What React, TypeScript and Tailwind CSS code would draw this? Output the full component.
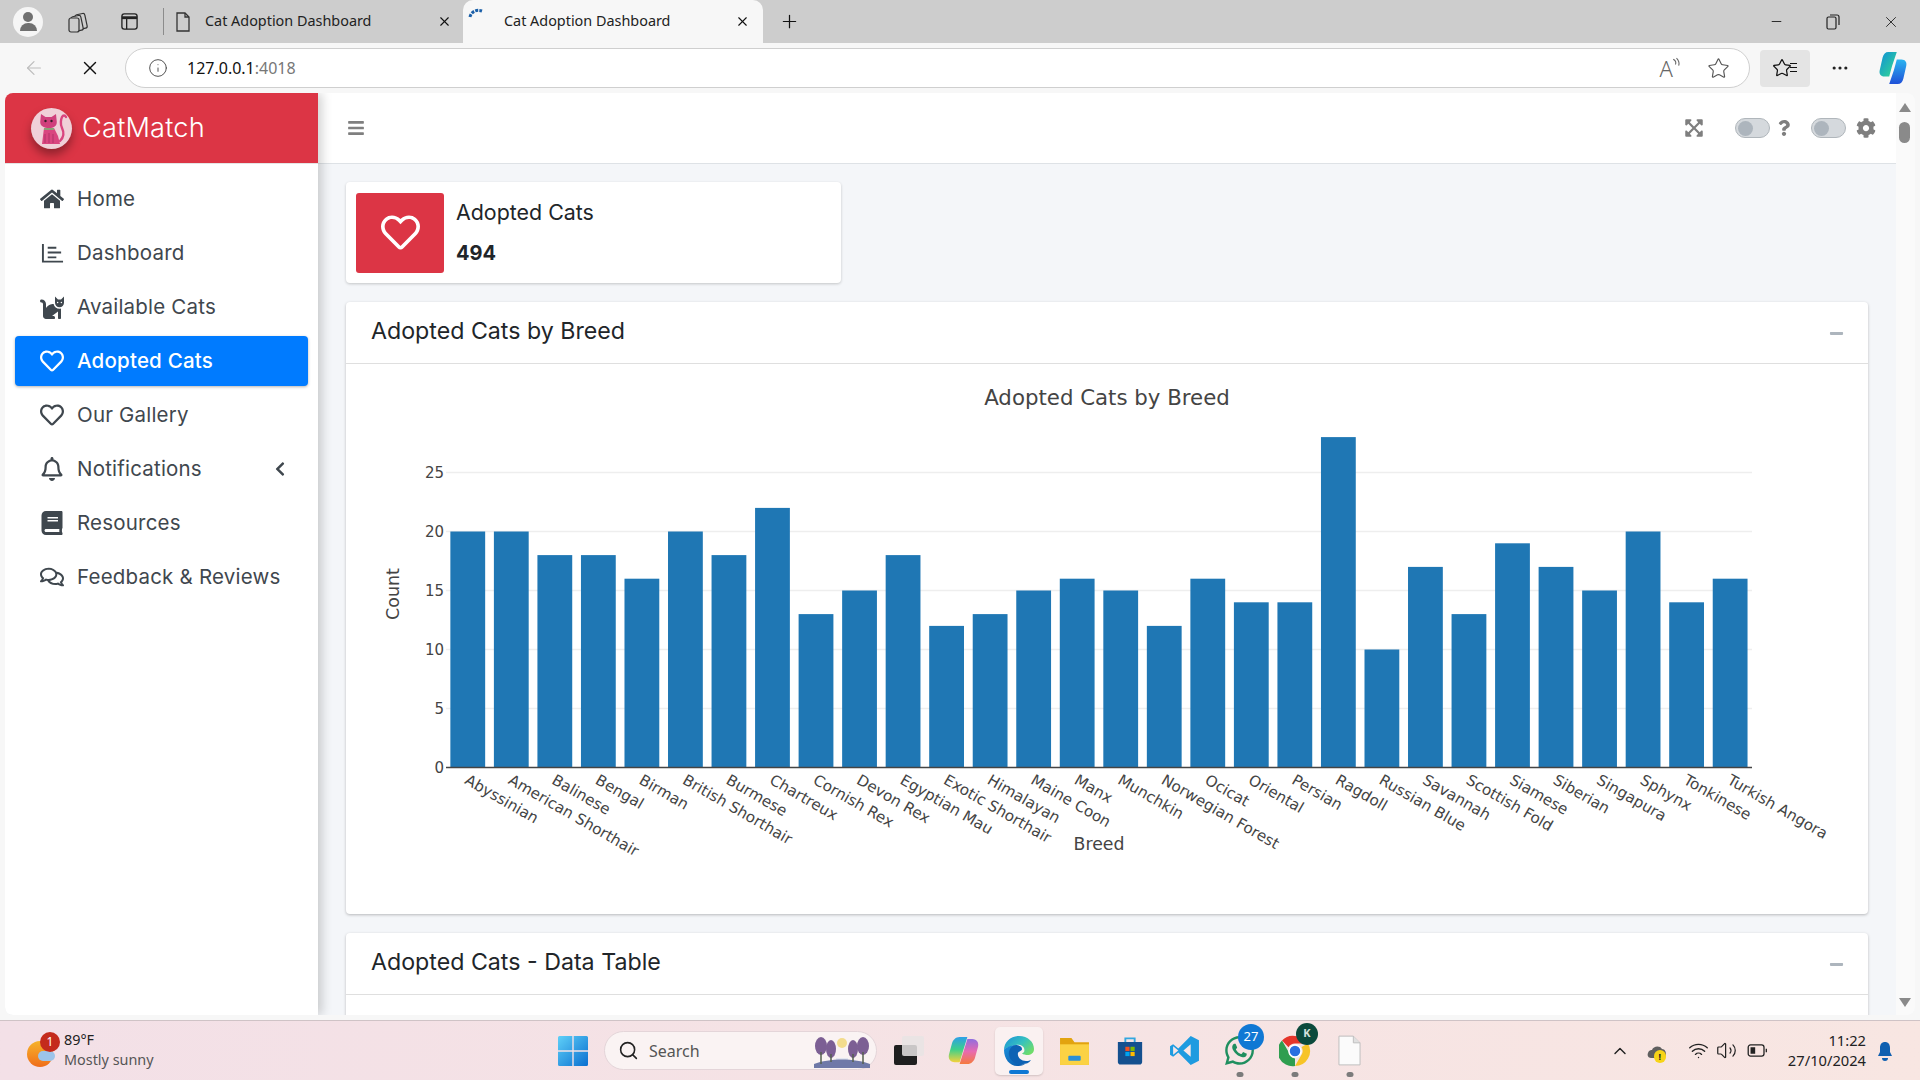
import React from "react";
import { FaHome, FaCat, FaRegHeart, FaRegBell, FaBook, FaRegComments, FaChevronLeft, FaBars, FaExpandArrowsAlt, FaQuestion, FaCog, FaMinus, FaWhatsapp } from "react-icons/fa";
import { ArrowLeft, X, Info, Star, MoreHorizontal, Plus, Minus, Search, ChevronUp, Wifi, Volume2 } from "lucide-react";

const breeds: [string, number][] = [["Abyssinian",20],["American Shorthair",20],["Balinese",18],["Bengal",18],["Birman",16],["British Shorthair",20],["Burmese",18],["Chartreux",22],["Cornish Rex",13],["Devon Rex",15],["Egyptian Mau",18],["Exotic Shorthair",12],["Himalayan",13],["Maine Coon",15],["Manx",16],["Munchkin",15],["Norwegian Forest",12],["Ocicat",16],["Oriental",14],["Persian",14],["Ragdoll",28],["Russian Blue",10],["Savannah",17],["Scottish Fold",13],["Siamese",19],["Siberian",17],["Singapura",15],["Sphynx",20],["Tonkinese",14],["Turkish Angora",16]];

function Chart() {
  const x0 = 446, step = 43.53, y0 = 767.5, u = 11.8;
  return (
    <svg width="1520" height="548" className="block" fontFamily="DejaVu Sans, sans-serif">
      <g transform="translate(-346,-364)">
        <text x="1107" y="405" textAnchor="middle" fontSize="21.3" fill="#444">Adopted Cats by Breed</text>
        {[5,10,15,20,25].map(t => <line key={t} x1={x0} x2={1752} y1={y0-t*u} y2={y0-t*u} stroke="#eeeeee" strokeWidth="1.5" />)}
        {[0,5,10,15,20,25].map(t => <text key={t} x="444" y={y0-t*u+5} textAnchor="end" fontSize="15" fill="#444">{t}</text>)}
        {breeds.map(([n,v],i) => {
          const cx = x0+step*(i+0.5);
          return <g key={n}>
            <rect x={cx-17.4} y={y0-v*u} width="34.8" height={v*u} fill="#1f77b4" />
            <text transform={`translate(${cx-4},783) rotate(30)`} fontSize="15.2" fill="#444">{n}</text>
          </g>;
        })}
        <line x1={x0} x2={1752} y1={y0} y2={y0} stroke="#444" strokeWidth="1.5" />
        <text x="1099" y="850" textAnchor="middle" fontSize="17.3" fill="#444">Breed</text>
        <text transform="translate(399,594) rotate(-90)" textAnchor="middle" fontSize="17.5" fill="#444">Count</text>
      </g>
    </svg>
  );
}

function Logo() {
  return (
    <div className="w-[41px] h-[41px] rounded-full bg-[#f0d0d8] shadow-[0_6px_10px_rgba(0,0,0,0.35)] shrink-0">
      <svg viewBox="0 0 41 41" width="41" height="41" className="overflow-visible">
        <path d="M29 33c4-4 4-9 2-13s-1-9 0-11c1-2 3-2 4 0" stroke="#d9457f" strokeWidth="2.400" fill="none" strokeLinecap="round" />
        <path d="M10 6l4.500 3h6l4.500-3 .8 8c0 4-3 6-7.800 6S9.200 18 9.200 14z" fill="#d0407c" />
        <path d="M13 20h10l4 8 2 8H11l1-8z" fill="#d9457f" />
        <path d="M13 21h10" stroke="#6fbf73" strokeWidth="1.400" />
        <path d="M14 26v9M18 25v10M22 26v9" stroke="#a82f63" strokeWidth=".8" />
        <circle cx="14.500" cy="13" r="1.200" fill="#3a1d2a" />
        <circle cx="20.500" cy="13" r="1.200" fill="#3a1d2a" />
      </svg>
    </div>
  );
}

function DashIcon() {
  return (
    <svg viewBox="0 0 24 24" width="23" height="23" fill="none" stroke="currentColor" strokeWidth="2">
      <path d="M2 2v18.500h21" /><path d="M7 6h9M7 11h14M7 16h9" />
    </svg>
  );
}

function NavItem({ icon, label, active, chevron }: { icon: React.ReactNode; label: string; active?: boolean; chevron?: boolean }) {
  return (
    <div className={`h-[50px] rounded-[4px] flex items-center pl-[22px] pr-[20px] ${active ? "bg-[#007bff] text-white shadow-[0_1px_3px_rgba(0,0,0,0.3)] font-medium" : "text-[#3f474e]"}`}>
      <span className="w-[30px] flex justify-center text-[24px] shrink-0">{icon}</span>
      <span className="ml-[10px] text-[20.5px] tracking-[0.2px] flex-1 whitespace-nowrap">{label}</span>
      {chevron && <FaChevronLeft className="text-[16px]" />}
    </div>
  );
}

function Toggle() {
  return (
    <div className="w-[35px] h-[20px] rounded-full bg-[#d5d9dd] border border-[#b0b6bb] flex items-center pl-[2px]">
      <div className="w-[15px] h-[15px] rounded-full bg-[#adb5bd]" />
    </div>
  );
}

function CardHead({ title }: { title: string }) {
  return (
    <div className="h-[62px] border-b border-[#dfdfdf] flex items-center pl-[25px] pr-[24px] pb-[2px] shrink-0">
      <span className="text-[23.2px] text-[#212529] flex-1">{title}</span>
      <FaMinus className="text-[15px] text-[#adb5bd] mt-[3px]" />
    </div>
  );
}

function DocIcon({ className = "" }: { className?: string }) {
  return (
    <svg viewBox="0 0 16 20" className={className} fill="none" stroke="#333" strokeWidth="1.300">
      <path d="M2 1h8l4 4v14H2z" /><path d="M10 1v4h4" />
    </svg>
  );
}

function TabTitle({ children }: { children: React.ReactNode }) {
  return <span className="text-[14.4px] text-[#222] whitespace-nowrap -mt-[2px]">{children}</span>;
}

function Copilot() {
  return (
    <svg viewBox="0 0 30 36" width="30" height="34">
      <defs>
        <linearGradient id="cpa" x1="0" y1="0" x2="1" y2="1"><stop offset="0" stopColor="#0f8fd8" /><stop offset="1" stopColor="#35dc8e" /></linearGradient>
        <linearGradient id="cpb" x1="0" y1="0" x2="0" y2="1"><stop offset="0" stopColor="#2ab4f0" /><stop offset="1" stopColor="#1f50d8" /></linearGradient>
      </defs>
      <path d="M10 1h9l-5 15-3 11H6c-4 0-6-3-5-7l3-13c1-4 3-6 6-6z" fill="url(#cpa)" />
      <path d="M20 35h-9l5-15 3-11h5c4 0 6 3 5 7l-3 13c-1 4-3 6-6 6z" fill="url(#cpb)" />
    </svg>
  );
}

function Edge() {
  return (
    <svg viewBox="0 0 32 32" width="32" height="32">
      <defs>
        <linearGradient id="eg1" x1="0" y1="0" x2="1" y2="0.700"><stop offset="0" stopColor="#1b8fd8" /><stop offset="0.550" stopColor="#35c1c0" /><stop offset="1" stopColor="#6fdc6a" /></linearGradient>
        <linearGradient id="eg2" x1="0" y1="0" x2="0.700" y2="1"><stop offset="0" stopColor="#1a90dc" /><stop offset="1" stopColor="#0c5fb0" /></linearGradient>
      </defs>
      <path d="M1 15C1 7 8 1 16 1c9 0 15 6 15 13 0 4-3 6-7 6-2 0-5-1-5-2 2 0 3-2 2-5-1-2-4-4-8-3C6 11 1 14 1 15z" fill="url(#eg1)" />
      <path d="M1 15c0-1 5-5 12-5-3 1-6 5-5 10 1 6 7 10 14 9-3 2-6 2-8 2C7 31 1 24 1 15z" fill="url(#eg2)" />
      <path d="M13 10c2 0 6 1 6 4 0 2-3 2-4 4-1 4 3 8 8 8 1 0 3 0 5-1-2 3-5 4-8 4-7 1-13-3-14-9-1-5 3-10 7-10z" fill="#0e62b4" />
    </svg>
  );
}

function Chrome() {
  return (
    <svg viewBox="0 0 32 32" width="32" height="32">
      <path d="M16 1a15 15 0 0 1 13 7.500H16a7.500 7.500 0 0 0-6.500 3.750L3 5.500A15 15 0 0 1 16 1z" fill="#e5352b" />
      <path d="M29 8.500A15 15 0 0 1 16 31l6.500-11.250A7.500 7.500 0 0 0 22.500 12z" fill="#f7c427" />
      <path d="M16 31A15 15 0 0 1 3 5.500l6.500 11.250A7.500 7.500 0 0 0 16 23.500z" fill="#2f9e4f" />
      <circle cx="16" cy="16" r="6" fill="#2b6fe0" stroke="#fff" strokeWidth="1.500" />
    </svg>
  );
}

function Dot() {
  return <span className="absolute left-1/2 -translate-x-1/2 top-[45px] w-[7px] h-[5px] rounded-full bg-[#7b7b7b]" />;
}

function TaskIcon({ children, dot }: { children: React.ReactNode; dot?: boolean }) {
  return (
    <div className="relative flex items-center justify-center h-[48px] w-[55px] shrink-0">
      {children}
      {dot && <Dot />}
    </div>
  );
}

export default function App() {
  return (
    <div className="w-[1920px] h-[1080px] overflow-hidden flex flex-col bg-[#f7f7f7] font-['Noto_Sans',sans-serif]">
      {/* tab strip */}
      <div className="h-[43px] bg-[#cdcdcd] flex items-stretch shrink-0">
        <div className="w-[163px] flex items-center shrink-0 relative">
          <div className="ml-[13px] w-[30px] h-[30px] rounded-full bg-[#f5f5f5] flex flex-col items-center justify-center">
            <div className="w-[10px] h-[10px] rounded-full bg-[#707070]" />
            <div className="w-[17px] h-[8px] mt-[1px] rounded-t-full rounded-b-[4px] bg-[#707070]" />
          </div>
          <svg viewBox="0 0 22 22" width="22" height="22" fill="none" stroke="#333" strokeWidth="1.200" className="ml-[24px]">
            <rect x="9" y="3" width="10" height="15" rx="2" transform="rotate(-12 14 10)" /><rect x="5" y="5" width="10" height="15" rx="2" transform="rotate(-12 10 12)" fill="#cdcdcd" /><rect x="2" y="7" width="10" height="14" rx="2" fill="#cdcdcd" />
          </svg>
          <svg viewBox="0 0 20 20" width="19" height="19" fill="none" stroke="#222" strokeWidth="1.400" className="ml-[31px]">
            <rect x="2" y="2" width="16" height="16" rx="2.500" /><path d="M2 6h16" strokeWidth="3" /><path d="M7 6v12" />
          </svg>
        </div>
        <div className="w-[1px] h-[27px] my-auto bg-[#8c8c8c] shrink-0" />
        <div className="w-[299px] flex items-center pl-[11px] shrink-0">
          <DocIcon className="w-[16px] h-[20px]" />
          <span className="ml-[14px] flex"><TabTitle>Cat Adoption Dashboard</TabTitle></span>
          <X size={15} strokeWidth={1.8} className="ml-auto mr-[11px] text-[#111]" />
        </div>
        <div className="w-[300px] bg-[#f7f7f7] rounded-t-[10px] flex items-center pl-[41px] shrink-0 relative">
          <svg viewBox="0 0 18 12" width="18" height="12" className="absolute left-[5px] top-[7px]"><path d="M2 10C3 5 8 2 14 4" fill="none" stroke="#1a5fa8" strokeWidth="3" strokeDasharray="3 1.200" /></svg>
          <TabTitle>Cat Adoption Dashboard</TabTitle>
          <X size={15} strokeWidth={1.8} className="ml-auto mr-[13px] text-[#111]" />
        </div>
        <Plus size={21} strokeWidth={1.4} className="my-auto ml-[16px] text-[#111]" />
        <div className="flex-1" />
        <div className="flex items-center shrink-0 pr-[20px] text-[#222]">
          <Minus size={15} strokeWidth={1.5} />
          <svg viewBox="0 0 14 16" width="14" height="16" fill="none" stroke="#222" strokeWidth="1.200" className="ml-[42px]"><rect x="1" y="3" width="9" height="12" rx="1.500" /><path d="M4 1h7a2 2 0 0 1 2 2v8" /></svg>
          <X size={18} strokeWidth={1.2} className="ml-[42px]" />
        </div>
      </div>

      {/* toolbar */}
      <div className="h-[50px] flex items-center shrink-0 relative">
        <ArrowLeft size={22} strokeWidth={1.3} className="ml-[23px] text-[#bdbdbd]" />
        <X size={22} strokeWidth={1.5} className="ml-[34px] text-[#111]" />
        <div className="ml-[24px] w-[1625px] h-[40px] rounded-full bg-white border-[1.5px] border-[#cfcfcf] flex items-center pl-[22px] pr-[19px]">
          <Info size={20} strokeWidth={1.1} className="text-[#444]" />
          <span className="ml-[19px] text-[16px] text-[#111]">127.0.0.1<span className="text-[#777]">:4018</span></span>
          <div className="flex-1" />
          <span className="relative text-[22px] leading-[24px] text-[#666] font-light">A<svg viewBox="0 0 10 12" width="11" height="13" fill="none" stroke="#666" strokeWidth="1" className="absolute -right-[9px] top-[1px]"><path d="M2 2c2 1 3 3 2 5M5 1c2 2 3 4 2 7" /></svg></span>
          <Star size={23} strokeWidth={1.2} className="ml-[34px] text-[#555]" />
        </div>
        <div className="ml-[10px] w-[50px] h-[37px] rounded-[4px] bg-[#e4e4e4] flex items-center justify-center relative">
          <Star size={20} strokeWidth={1.5} className="text-[#111] -ml-[6px]" />
          <span className="absolute right-[13px] top-[13px] w-[7px] h-[1.500px] bg-[#111] shadow-[0_4px_0_#111,0_8px_0_#111]" />
        </div>
        <MoreHorizontal size={20} strokeWidth={1.8} className="ml-[20px] text-[#222]" />
        <div className="ml-[28px]"><Copilot /></div>
      </div>

      {/* page */}
      <div className="h-[922px] ml-[5px] mr-[5px] rounded-[8px] overflow-hidden flex bg-[#f4f6f9] shrink-0">
        {/* sidebar */}
        <div className="w-[313px] bg-white shadow-[4px_0_10px_rgba(0,0,0,0.18)] flex flex-col shrink-0 z-10 font-[Inter]">
          <div className="h-[71px] bg-[#dc3545] flex items-center pl-[26px] border-b border-[#e4e4e4] shrink-0">
            <Logo />
            <span className="ml-[10px] text-[27.2px] font-light text-white tracking-[0.2px]">CatMatch</span>
          </div>
          <nav className="flex flex-col gap-[4px] px-[10px] pt-[10px]">
            <NavItem icon={<FaHome />} label="Home" />
            <NavItem icon={<DashIcon />} label="Dashboard" />
            <NavItem icon={<FaCat />} label="Available Cats" />
            <NavItem icon={<FaRegHeart />} label="Adopted Cats" active />
            <NavItem icon={<FaRegHeart />} label="Our Gallery" />
            <NavItem icon={<FaRegBell />} label="Notifications" chevron />
            <NavItem icon={<FaBook />} label="Resources" />
            <NavItem icon={<FaRegComments />} label="Feedback & Reviews" />
          </nav>
        </div>

        {/* main */}
        <div className="flex-1 flex flex-col min-w-0 font-[Inter]">
          <div className="h-[71px] bg-white border-b border-[#dee2e6] flex items-center pl-[29px] pr-[20px] shrink-0 text-[#7f7f7f]">
            <FaBars className="text-[18px]" />
            <div className="flex-1" />
            <FaExpandArrowsAlt className="text-[20px]" />
            <div className="ml-[31px]"><Toggle /></div>
            <FaQuestion className="ml-[7px] text-[16px] w-[14px]" />
            <div className="ml-[20px]"><Toggle /></div>
            <FaCog className="ml-[10px] text-[20px]" />
          </div>
          <div className="flex-1 overflow-hidden px-[28px] pt-[18px] flex flex-col gap-[19px]">
            <div className="w-[495px] h-[101px] bg-white rounded-[4px] shadow-[0_1px_3px_rgba(0,0,0,0.2)] flex items-center p-[10px] shrink-0">
              <div className="w-[88px] h-[80px] bg-[#dc3545] rounded-[3px] flex items-center justify-center">
                <FaRegHeart className="text-[39px] text-white" />
              </div>
              <div className="ml-[12px] flex flex-col gap-[15px] text-[#212529]">
                <span className="text-[21.4px] leading-[26px]">Adopted Cats</span>
                <span className="text-[20px] leading-[26px] font-bold">494</span>
              </div>
            </div>
            <div className="h-[612px] bg-white rounded-[4px] shadow-[0_1px_3px_rgba(0,0,0,0.25)] flex flex-col shrink-0">
              <CardHead title="Adopted Cats by Breed" />
              <Chart />
            </div>
            <div className="h-[200px] bg-white rounded-[4px] shadow-[0_1px_3px_rgba(0,0,0,0.25)] flex flex-col shrink-0">
              <CardHead title="Adopted Cats - Data Table" />
            </div>
          </div>
        </div>

        {/* scrollbar */}
        <div className="w-[19px] bg-[#fafafa] flex flex-col items-center shrink-0 pr-[2px]">
          <div className="mt-[10px] w-0 h-0 border-l-[6px] border-r-[6px] border-b-[9px] border-l-transparent border-r-transparent border-b-[#8a8a8a]" />
          <div className="mt-[10px] w-[11px] h-[21px] rounded-full bg-[#8a8a8a]" />
          <div className="flex-1" />
          <div className="mb-[8px] w-0 h-0 border-l-[6px] border-r-[6px] border-t-[9px] border-l-transparent border-r-transparent border-t-[#8a8a8a]" />
        </div>
      </div>

      <div className="h-[5px] shrink-0" />

      {/* taskbar */}
      <div className="h-[60px] border-t border-[#cfc3c6] bg-gradient-to-r from-[#f3e0e7] to-[#f8e6e2] flex items-center shrink-0 font-['Noto_Sans',sans-serif]">
        <div className="relative ml-[27px] w-[30px] h-[30px] shrink-0">
          <div className="w-[26px] h-[26px] mt-[5px] rounded-full bg-gradient-to-b from-[#f5b32a] to-[#ef6c1a]" />
          <div className="absolute left-[11px] top-[15px] w-[17px] h-[10px] rounded-full bg-[#9cc4ea]" />
          <div className="absolute left-[13px] -top-[4px] w-[20px] h-[20px] rounded-full bg-[#c42b1c] text-white text-[12px] flex items-center justify-center">1</div>
        </div>
        <div className="ml-[7px] flex flex-col text-[14.4px] leading-[20px] w-[494px] shrink-0 -mt-[2px]">
          <span className="text-[#222]">89°F</span>
          <span className="text-[#555]">Mostly sunny</span>
        </div>
        <svg viewBox="0 0 30 30" width="30" height="30" className="shrink-0">
          <defs><linearGradient id="win" x1="0" y1="0" x2="1" y2="1"><stop offset="0" stopColor="#5fd0f8" /><stop offset="1" stopColor="#0a6fd0" /></linearGradient></defs>
          <path d="M0 1.500A1.500 1.500 0 0 1 1.500 0H14.300v14.300H0zM15.700 0H28.500A1.500 1.500 0 0 1 30 1.500V14.300H15.700zM0 15.700H14.300V30H1.500A1.500 1.500 0 0 1 0 28.500zM15.700 15.700H30V28.500A1.500 1.500 0 0 1 28.500 30H15.700z" fill="url(#win)" />
        </svg>
        <div className="ml-[16px] w-[273px] h-[39px] rounded-full bg-[#faf3f3] border border-[#e4d5d9] flex items-center pl-[13px] pr-[6px] shrink-0">
          <Search size={21} strokeWidth={1.8} className="text-[#222]" />
          <span className="ml-[10px] text-[16px] text-[#555]">Search</span>
          <div className="flex-1" />
          <svg viewBox="0 0 56 34" width="56" height="34">
            <rect x="22" y="24" width="12" height="10" fill="#e4e7f0" />
            <path d="M0 30c15-6 41-6 56 0v4H0z" fill="#6f79a8" />
            <circle cx="28" cy="9" r="5" fill="#f3dc8d" />
            <g fill="#7c5f94"><ellipse cx="7" cy="12" rx="6" ry="9" /><ellipse cx="17" cy="15" rx="5" ry="9" /><ellipse cx="39" cy="15" rx="5" ry="9" /><ellipse cx="49" cy="12" rx="6" ry="9" /></g>
            <g stroke="#55604f" strokeWidth="1.500"><path d="M7 18v12M17 20v8M39 20v8M49 18v12" /></g>
          </svg>
        </div>
        <div className="relative ml-[17px] w-[30px] h-[29px] shrink-0">
          <div className="absolute left-0 bottom-0 w-[23px] h-[20px] rounded-[2px] bg-[#1f1f1f]" />
          <div className="absolute right-0 top-0 w-[22px] h-[20px] rounded-[2px] bg-[#e8e4e4]/85" />
        </div>
        <svg viewBox="0 0 32 32" width="31" height="31" className="ml-[24px] shrink-0">
          <defs>
            <linearGradient id="cw" x1="0" y1="0" x2="0" y2="1"><stop offset="0" stopColor="#2d9fe8" /><stop offset="0.500" stopColor="#3fd08a" /><stop offset="1" stopColor="#f2d23c" /></linearGradient>
            <linearGradient id="cw2" x1="0" y1="0" x2="0" y2="1"><stop offset="0" stopColor="#8f6ee0" /><stop offset="0.500" stopColor="#e86ab0" /><stop offset="1" stopColor="#f57a3d" /></linearGradient>
          </defs>
          <path d="M12 2h8l-4 13-4 13H7c-5 0-7-4-6-8l3-11c1-4 4-7 8-7z" fill="url(#cw)" />
          <path d="M20 30h-8l4-13 4-13h5c5 0 7 4 6 8l-3 11c-1 4-4 7-8 7z" fill="url(#cw2)" />
        </svg>
        <div className="relative ml-[16px] w-[48px] h-[48px] rounded-[5px] bg-[#faf1f1] shadow-[0_1px_2px_rgba(0,0,0,0.15)] flex items-center justify-center shrink-0">
          <Edge />
          <span className="absolute bottom-[1px] left-1/2 -translate-x-1/2 w-[20px] h-[4px] rounded-full bg-[#0f78d4]" />
        </div>
        <div className="ml-[4px] flex items-center">
          <TaskIcon>
            <svg viewBox="0 0 30 30" width="31" height="31"><path d="M1 3h11l3 4h14v22H1z" fill="#e2a30f" /><path d="M1 9h28v20H1z" fill="#fbd244" /><rect x="9" y="20" width="12" height="5" rx="1" fill="#2a8fd8" /></svg>
          </TaskIcon>
          <TaskIcon>
            <svg viewBox="0 0 30 32" width="28" height="31"><path d="M10 7V3h10v4" fill="none" stroke="#32a7e0" strokeWidth="2" /><path d="M2 7h26v21a3 3 0 0 1-3 3H5a3 3 0 0 1-3-3z" fill="#14508f" /><rect x="10" y="12" width="4.500" height="4.500" fill="#f25022" /><rect x="15.500" y="12" width="4.500" height="4.500" fill="#7fba00" /><rect x="10" y="17.500" width="4.500" height="4.500" fill="#00a4ef" /><rect x="15.500" y="17.500" width="4.500" height="4.500" fill="#ffb900" /></svg>
          </TaskIcon>
          <TaskIcon>
            <svg viewBox="0 0 30 30" width="31" height="31"><path d="M21 1l8 4v20l-8 4-12-12-5 4-3-2V11l3-2 5 4z" fill="#1e9be0" /><path d="M21 9l-7 6 7 6z" fill="#f8e6e6" /><path d="M4 11l5 4-5 4z" fill="#f8e6e6" /></svg>
          </TaskIcon>
          <TaskIcon dot>
            <FaWhatsapp className="text-[33px] text-[#1f8f5f]" />
            <span className="absolute left-[26px] -top-[3px] min-w-[26px] h-[26px] rounded-full bg-[#0f78d4] text-white text-[13px] flex items-center justify-center">27</span>
          </TaskIcon>
          <TaskIcon dot>
            <Chrome />
            <span className="absolute left-[29px] -top-[4px] w-[22px] h-[22px] rounded-full bg-[#0b4a3c] text-[#d4e2dc] text-[11px] font-bold flex items-center justify-center">K</span>
          </TaskIcon>
          <TaskIcon dot>
            <svg viewBox="0 0 24 32" width="23" height="31"><path d="M1 1h15l7 7v23H1z" fill="#fbfbfb" stroke="#bdbdbd" /><path d="M16 1v7h7" fill="#e0e0e0" stroke="#bdbdbd" /></svg>
          </TaskIcon>
        </div>
        <div className="flex-1" />
        <ChevronUp size={20} strokeWidth={1.7} className="text-[#222] shrink-0" />
        <div className="relative ml-[17px] w-[20px] h-[20px] shrink-0">
          <svg viewBox="0 0 20 20" width="20" height="20"><path d="M4 17c-3 0-4-3-3-5 1-3 3-3 4-3 1-4 8-5 10-1 3 0 4 3 4 5s-2 4-3 4z" fill="#5f5f5f" /></svg>
          <span className="absolute right-[1px] -bottom-[2px] w-[12px] h-[13px] rounded-full bg-[#f7d417] text-[9px] leading-[13px] text-center font-bold text-[#222]">!</span>
        </div>
        <Wifi size={21} strokeWidth={1.6} className="ml-[21px] text-[#222] shrink-0" />
        <Volume2 size={21} strokeWidth={1.4} className="ml-[7px] text-[#222] shrink-0" />
        <svg viewBox="0 0 22 14" width="21" height="13" fill="none" stroke="#222" strokeWidth="1.400" className="ml-[10px] shrink-0"><rect x="1" y="1" width="17" height="12" rx="2.500" /><rect x="3.500" y="3.500" width="5" height="7" fill="#222" stroke="none" /><path d="M20.500 5v4" /></svg>
        <div className="ml-[20px] flex flex-col items-end text-[14.7px] leading-[20px] text-[#222] shrink-0 -mt-[1px]">
          <span>11:22</span>
          <span>27/10/2024</span>
        </div>
        <svg viewBox="0 0 16 20" width="16" height="20" className="ml-[11px] mr-[27px] shrink-0"><path d="M8 1c3 0 5 2 5 6v4l2 4H1l2-4V7c0-4 2-6 5-6z" fill="#0f5fb0" /><path d="M5 17h6c0 2-1 3-3 3s-3-1-3-3z" fill="#0f5fb0" /></svg>
      </div>
    </div>
  );
}
